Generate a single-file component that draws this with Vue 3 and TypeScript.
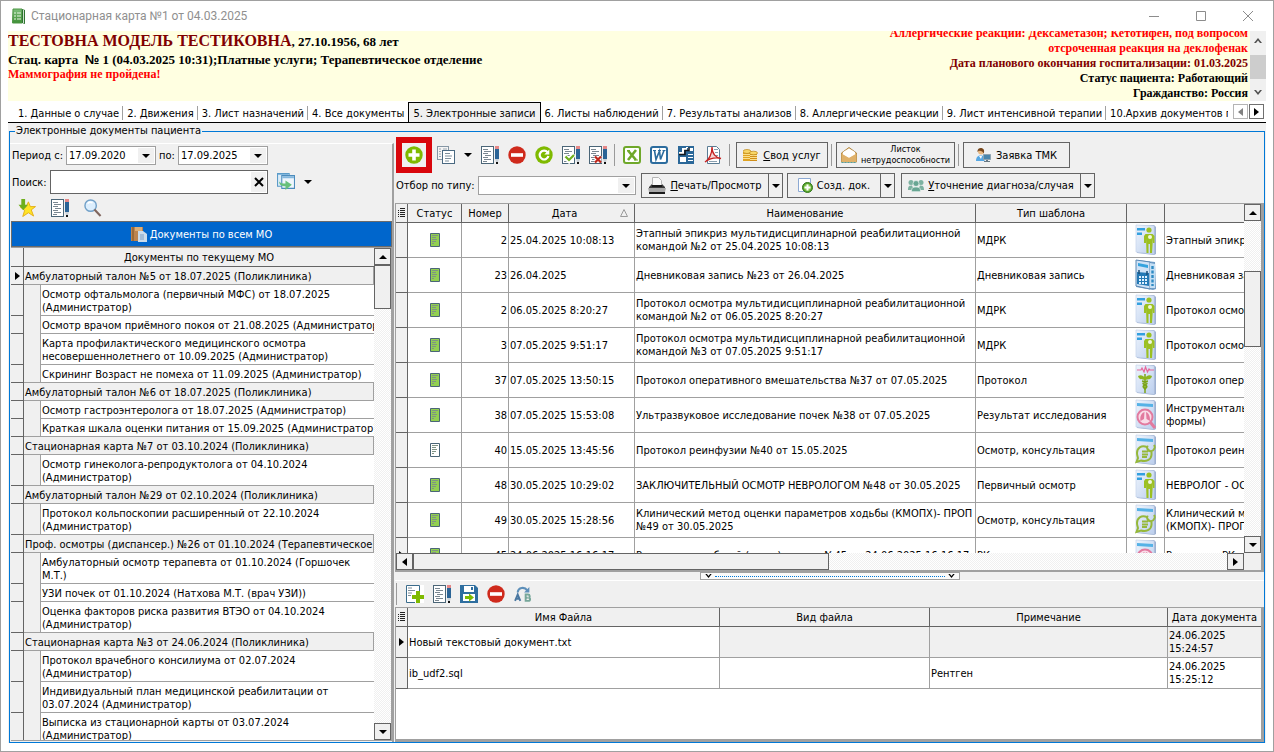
<script setup lang="ts">
import { ref } from 'vue'

interface Visit {
  title: string
  docs: string[]
}

interface DocRecord {
  done: boolean
  num: string
  date: string
  name: string
  type: string
  icon: string
  template: string
  current?: boolean
}

interface FileRow {
  name: string
  kind: string
  note: string
  date: string
  active: boolean
}

const periodFrom = ref('17.09.2020')
const periodTo = ref('17.09.2025')
const search = ref('')
const typeFilter = ref('')
const activeTab = ref(4)

const tabs: string[] = [
  '1. Данные о случае',
  '2. Движения',
  '3. Лист назначений',
  '4. Все документы',
  '5. Электронные записи',
  '6. Листы наблюдений',
  '7. Результаты анализов',
  '8. Аллергические реакции',
  '9. Лист интенсивной терапии',
  '10.Архив документов пациента',
]

const visits: Visit[] = [
  {
    title: 'Амбулаторный талон №5 от 18.07.2025 (Поликлиника)',
    docs: [
      'Осмотр офтальмолога (первичный МФС) от 18.07.2025\n(Администратор)',
      'Осмотр врачом приёмного покоя от 21.08.2025 (Администратор)',
      'Карта профилактического медицинского осмотра\nнесовершеннолетнего от 10.09.2025 (Администратор)',
      'Скрининг Возраст не помеха от 11.09.2025 (Администратор)',
    ],
  },
  {
    title: 'Амбулаторный талон №6 от 18.07.2025 (Поликлиника)',
    docs: [
      'Осмотр гастроэнтеролога от 18.07.2025 (Администратор)',
      'Краткая шкала оценки питания от 15.09.2025 (Администратор)',
    ],
  },
  {
    title: 'Стационарная карта №7 от 03.10.2024 (Поликлиника)',
    docs: ['Осмотр гинеколога-репродуктолога от 04.10.2024\n(Администратор)'],
  },
  {
    title: 'Амбулаторный талон №29 от 02.10.2024 (Поликлиника)',
    docs: ['Протокол кольпоскопии расширенный от 22.10.2024\n(Администратор)'],
  },
  {
    title: 'Проф. осмотры (диспансер.) №26 от 01.10.2024 (Терапевтическое',
    docs: [
      'Амбулаторный осмотр терапевта от 01.10.2024 (Горшочек\nМ.Т.)',
      'УЗИ почек от 01.10.2024 (Натхова М.Т. (врач УЗИ))',
      'Оценка факторов риска развития ВТЭО от 04.10.2024\n(Администратор)',
    ],
  },
  {
    title: 'Стационарная карта №3 от 24.06.2024 (Поликлиника)',
    docs: [
      'Протокол врачебного консилиума от 02.07.2024\n(Администратор)',
      'Индивидуальный план медицинской реабилитации от\n03.07.2024 (Администратор)',
      'Выписка из стационарной карты от 03.07.2024\n(Администратор)',
    ],
  },
]

const records: DocRecord[] = [
  { done: true, num: '2', date: '25.04.2025 10:08:13', name: 'Этапный эпикриз мультидисциплинарной реабилитационной\nкомандой №2 от 25.04.2025 10:08:13', type: 'МДРК', icon: 'person', template: 'Этапный эпикриз' },
  { done: true, num: '23', date: '26.04.2025', name: 'Дневниковая запись №23 от 26.04.2025', type: 'Дневниковая запись', icon: 'diary', template: 'Дневниковая запись' },
  { done: true, num: '2', date: '06.05.2025 8:20:27', name: 'Протокол осмотра мультидисциплинарной реабилитационной\nкомандой №2 от 06.05.2025 8:20:27', type: 'МДРК', icon: 'person', template: 'Протокол осмотра' },
  { done: true, num: '3', date: '07.05.2025 9:51:17', name: 'Протокол осмотра мультидисциплинарной реабилитационной\nкомандой №3 от 07.05.2025 9:51:17', type: 'МДРК', icon: 'person', template: 'Протокол осмотра' },
  { done: true, num: '37', date: '07.05.2025 13:50:15', name: 'Протокол оперативного вмешательства №37 от 07.05.2025', type: 'Протокол', icon: 'caduceus', template: 'Протокол оперативного' },
  { done: true, num: '38', date: '07.05.2025 15:53:08', name: 'Ультразвуковое исследование почек №38 от 07.05.2025', type: 'Результат исследования', icon: 'lungs', template: 'Инструментальные\nформы)' },
  { done: false, num: '40', date: '15.05.2025 13:45:56', name: 'Протокол реинфузии №40 от 15.05.2025', type: 'Осмотр, консультация', icon: 'consult', template: 'Протокол реинфузии' },
  { done: true, num: '48', date: '30.05.2025 10:29:02', name: 'ЗАКЛЮЧИТЕЛЬНЫЙ ОСМОТР НЕВРОЛОГОМ №48 от 30.05.2025', type: 'Первичный осмотр', icon: 'person', template: 'НЕВРОЛОГ - ОСМОТР' },
  { done: true, num: '49', date: '30.05.2025 15:28:56', name: 'Клинический метод оценки параметров ходьбы (КМОПХ)- ПРОП\n№49 от 30.05.2025', type: 'Осмотр, консультация', icon: 'consult', template: 'Клинический метод\n(КМОПХ)- ПРОП' },
  { done: true, num: '45', date: '24.06.2025 16:16:17', name: 'Результат на общий (клин.) анализ №45 от 24.06.2025 16:16:17', type: 'РК', icon: 'lungs', template: 'Результат РК', current: true },
]

const files: FileRow[] = [
  { name: 'Новый текстовый документ.txt', kind: '', note: '', date: '24.06.2025 15:24:57', active: true },
  { name: 'ib_udf2.sql', kind: '', note: 'Рентген', date: '24.06.2025 15:25:12', active: false },
]
</script>

<template>
  <svg class="sprite" aria-hidden="true">
    <defs>
      <linearGradient id="page" x1="0" y1="0" x2="1" y2="1">
        <stop offset="0" stop-color="#eef4fc" />
        <stop offset="1" stop-color="#bccfee" />
      </linearGradient>
      <linearGradient id="book" x1="0" y1="0" x2="0" y2="1">
        <stop offset="0" stop-color="#7fc07c" />
        <stop offset="1" stop-color="#3e8f35" />
      </linearGradient>
    </defs>
    <symbol id="i-book" viewBox="0 0 15 16">
      <path d="M2 1 L11 1 L11 15 L1.5 15 Z" fill="url(#book)" stroke="#4d9645" />
      <path d="M11 1 L14 2 V16 L11 15Z" fill="#2f7430" />
      <path d="M12.5 2 V15" stroke="#cfe3cf" />
      <path d="M3 5h2M3 8h2M3 11h2M6 5h4M6 8h4M6 11h4" stroke="#e9f6e4" />
    </symbol>
    <symbol id="i-add" viewBox="0 0 18 18">
      <circle cx="9" cy="9" r="8.7" fill="#7fba00" />
      <path d="M9 3.5v11M3.5 9h11" stroke="#fff" stroke-width="3.6" />
    </symbol>
    <symbol id="i-minus" viewBox="0 0 18 18">
      <circle cx="9" cy="9" r="8.7" fill="#cf2a1c" />
      <path d="M3 9h12" stroke="#fff" stroke-width="3.6" />
    </symbol>
    <symbol id="i-refresh" viewBox="0 0 18 18">
      <circle cx="9" cy="9" r="8.7" fill="#7fba00" />
      <path d="M12.6 6.4A4.4 4.4 0 1 0 13.4 10" fill="none" stroke="#fff" stroke-width="2.2" />
      <path d="M14.3 3.6V8.6H9.3Z" fill="#fff" />
    </symbol>
    <symbol id="i-copy" viewBox="0 0 18 18">
      <rect x=".5" y=".5" width="11" height="13" fill="#f4f4f4" stroke="#8596a4" />
      <path d="M2 3h2M2 5.500h2M2 8h2M2 10.500h2M6 3h4" stroke="#9aa7b2" />
      <rect x="5.500" y="4.500" width="12" height="13" fill="#fff" stroke="#4a6981" />
      <path d="M8 7.500h5M8 10h7M8 12.500h6M8 15h4" stroke="#7d8e9b" />
    </symbol>
    <symbol id="i-sheet" viewBox="0 0 18 18">
      <rect x=".5" y=".5" width="12" height="17" fill="#fff" stroke="#4a6577" />
      <path d="M2 3.500h5M3 5.500h7M2 7.500h5M4 9.500h6M2 11.500h5M3 13.500h7M2 15.500h4" stroke="#7a8791" />
      <path d="M14 0h4v3h-4z" fill="#e58787" />
      <path d="M14 3h4v10h-4z" fill="#2b6496" />
      <path d="M14 13h4l-1 3h-2z" fill="#cbd2d8" />
      <path d="M15 16h2v2h-2z" fill="#111" />
    </symbol>
    <symbol id="i-sheet-ok" viewBox="0 0 18 18">
      <use href="#i-sheet" width="18" height="18" />
      <path d="M3 10.500L7 14.500L12 8" fill="none" stroke="#fff" stroke-width="5" />
      <path d="M3.500 10.500L7 14L12 9" fill="none" stroke="#6fae1c" stroke-width="2.200" />
    </symbol>
    <symbol id="i-sheet-no" viewBox="0 0 18 18">
      <use href="#i-sheet" width="18" height="18" />
      <path d="M5.500 10h7v7h-7z" fill="#fff" />
      <path d="M6 10.500L12 16.500M12 10.500L6 16.500" stroke="#c0281c" stroke-width="2.200" />
    </symbol>
    <symbol id="i-sheet-add" viewBox="0 0 18 18">
      <path d="M0 0h18v18H0z" fill="#fff" />
      <path d="M.5.5h13v17H.5z" fill="#fff" stroke="#3b6c8c" />
      <path d="M2 3h4M2 5.500h7M2 8h4M2 10.500h3" stroke="#7c8c98" />
      <path d="M12 6v12M6 12h12" stroke="#fff" stroke-width="6" />
      <path d="M12 6v12M6 12h12" stroke="#7fba00" stroke-width="4" />
    </symbol>
    <symbol id="i-excel" viewBox="0 0 18 18">
      <rect x="1" y="1" width="16" height="16" rx="2" fill="#fff" stroke="#6fa82a" stroke-width="2" />
      <path d="M5 4.500L13 14M13 4L5 14" stroke="#6fa82a" stroke-width="2.600" />
      <path d="M11 14h4M4 4.500h3" stroke="#6fa82a" />
    </symbol>
    <symbol id="i-word" viewBox="0 0 18 18">
      <rect x="1" y="1" width="16" height="16" rx="2" fill="#fff" stroke="#2c6c9e" stroke-width="2" />
      <path d="M4.500 4.500L6 13.500L9.500 5L10.500 13.500L14 4.500" fill="none" stroke="#2c6c9e" stroke-width="1.600" />
      <path d="M3 4.500h3M8 4.500h3M12.500 4.500h3" stroke="#2c6c9e" />
    </symbol>
    <symbol id="i-export" viewBox="0 0 18 18">
      <path d="M1 0h16v18H1z" fill="#2b6899" />
      <path d="M10 2h6v3h-6zM2 8h5V4h4V1H9v1H5v4H2zM3 11h6v5H3zM11 8h5v1h-5zM11 11h5v1h-5zM11 14h5v1h-5z" fill="#fff" />
      <path d="M2 8.500h6v-4h4v-3" fill="none" stroke="#12161a" stroke-width="1.500" />
    </symbol>
    <symbol id="i-pdf" viewBox="0 0 18 18">
      <path d="M3.500.5h9l3 3v14h-12z" fill="#fff" stroke="#5a7c94" />
      <path d="M10 3.500h4M11 6.500h3M11 9.500h3M5 15.500h8" stroke="#8aa0b0" />
      <path d="M1 16C5 14 8 8 8 1C8 8 12 12 17 12.500C11 11 5 13 1 16Z" fill="#c62222" fill-opacity=".2" stroke="#c62222" stroke-width="1.300" />
    </symbol>
    <symbol id="i-coins" viewBox="0 0 15 14">
      <path d="M0 4h7v9H0z" fill="#e0a321" />
      <path d="M7 5h7v8H7z" fill="#d08e1a" />
      <path d="M0 6.500h7M0 8.500h7M0 10.500h7M7 7.500h7M7 9.500h7M7 11.500h7" stroke="#fae08c" />
      <ellipse cx="4" cy="3.500" rx="4" ry="2" fill="#f8d767" stroke="#bb8414" stroke-width=".7" />
      <ellipse cx="10.500" cy="5" rx="4" ry="1.800" fill="#f8d767" stroke="#bb8414" stroke-width=".7" />
    </symbol>
    <symbol id="i-letter" viewBox="0 0 16 16">
      <path d="M.5 6L8 .5L15.500 6V15H.5Z" fill="#e8c07e" stroke="#ad8441" />
      <path d="M2 5L8 1.500L14 5V8L8 11L2 8Z" fill="#fff" />
      <path d="M.5 6.500L8 11L15.500 6.500V15H.5Z" fill="#dfb16a" />
      <path d="M.5 15.500h15" stroke="#4ea0a4" stroke-dasharray="2 1" />
    </symbol>
    <symbol id="i-telemed" viewBox="0 0 15 14">
      <circle cx="5" cy="3.500" r="3" fill="#eab982" />
      <path d="M1.500 4C1 1 4-.5 6 .3C8.500 1 8.500 4 7.500 5.500C7 3 4 3 3 2.500Z" fill="#76461c" />
      <path d="M0 13C0 9 2 7.500 4.500 7.500S8 8 8.500 10V13Z" fill="#56a7e3" />
      <path d="M3 8l2 3l1-3" fill="#fff" />
      <path d="M7.500 6.500h7v5h-7z" fill="#4a86ad" stroke="#8fa3b0" />
      <path d="M10 12h2v1h2v1H8v-1h2z" fill="#677883" />
    </symbol>
    <symbol id="i-printer" viewBox="0 0 18 18">
      <path d="M4.500.5h6l3 3v6h-9z" fill="#fafafa" stroke="#b5b5b5" />
      <path d="M1 10L4 7V9H14V7L17 10V13H1Z" fill="#3b3b3b" />
      <path d="M0 11h18l-1 4H1z" fill="#a9a9a9" />
      <path d="M4 8h10v2H4z" fill="#181818" />
      <path d="M1 15h16v2H1z" fill="#1b1b1b" />
    </symbol>
    <symbol id="i-doc-add" viewBox="0 0 15 15">
      <path d="M.5.5h12v13H.5z" fill="#fff" stroke="#8ca9d3" />
      <circle cx="9.500" cy="9.500" r="5" fill="#56a52a" stroke="#35761c" />
      <circle cx="9.500" cy="9.500" r="3.500" fill="#88c653" />
      <path d="M9.500 6.500v6M6.500 9.500h6" stroke="#fff" stroke-width="2" />
    </symbol>
    <symbol id="i-people" viewBox="0 0 16 13">
      <g fill="#7db2a1">
        <circle cx="3" cy="3.500" r="2.500" />
        <circle cx="13" cy="3.500" r="2.500" />
        <path d="M0 11C0 7 1.500 6.500 4 6.500L6 11ZM16 11C16 7 14.500 6.500 12 6.500L10 11Z" />
      </g>
      <g fill="#68a693" stroke="#eef5f2" stroke-width=".7">
        <circle cx="8" cy="4.500" r="3" />
        <path d="M3.500 12.700C3.500 8.500 5 8 8 8S12.500 8.500 12.500 12.700Z" />
      </g>
    </symbol>
    <symbol id="i-windows" viewBox="0 0 17 17">
      <path d="M.5.5h11v12H.5z" fill="#dcecf8" stroke="#5b9bc8" />
      <path d="M4.500 2.500h12v12h-12z" fill="#eff6fc" stroke="#4c8cbc" />
      <path d="M5 3h11v2H5zM1 1h10v1H1z" fill="#83b7dd" />
      <path d="M2 8C2 11 4 12.500 8 12.500V16L14 11L8 7V10C5 10 4 10 2 8Z" fill="#67c07b" />
    </symbol>
    <symbol id="i-star" viewBox="0 0 18 19">
      <path d="M10.500 3L12.500 8H18L13.500 11.500L16 18L10.500 14.500L4.500 18.500L6.500 12L2 8.500H8Z" fill="#ffe425" stroke="#e3ad18" />
      <path d="M3 0h4v6h3l-5 6l-5-6h3z" fill="#6faf1c" />
    </symbol>
    <symbol id="i-search" viewBox="0 0 19 19">
      <circle cx="7" cy="7" r="6" fill="#dceefd" stroke="#71a0c8" stroke-width="1.500" />
      <path d="M4 5C5 3 7 3 9 4" fill="none" stroke="#fff" stroke-width="1.500" />
      <path d="M11 11L17.500 18" stroke="#80665e" stroke-width="2.200" />
    </symbol>
    <symbol id="i-allmo" viewBox="0 0 16 16">
      <path d="M0 1h12v14H0z" fill="#bd844e" />
      <path d="M2 1v14" stroke="#795025" />
      <path d="M4 1h7v4H4z" fill="#dcae78" />
      <path d="M7 5h5l4 3v8H7z" fill="#cbdceb" />
      <path d="M9 8h4v6H9z" fill="#a3bdd7" />
    </symbol>
    <symbol id="i-save" viewBox="0 0 18 18">
      <path d="M0 0h15l3 3v15H0z" fill="#2e6e9f" />
      <path d="M4 1h10v6H4zM3 9h12v7H3z" fill="#fff" />
      <path d="M11 2h2v3h-2z" fill="#2e6e9f" />
      <path d="M5 11h4V8.500l5 4l-5 4V14H5z" fill="#7fba00" />
    </symbol>
    <symbol id="i-rename" viewBox="0 0 17 15">
      <path d="M3.500 6C4 1 10 .5 12.500 4" fill="none" stroke="#5d8fb9" stroke-width="2" />
      <path d="M9.500 6h5V1Z" fill="#5d8fb9" />
      <path d="M1 14L3.500 8L6 14M2 12h3.500" fill="none" stroke="#4a77a0" stroke-width="1.800" />
      <path d="M11 8v6h2.500c2.300 0 2.300-3 0-3c2 0 1.700-3-.3-3zM11 11h2" fill="none" stroke="#77a79a" stroke-width="1.800" />
    </symbol>
    <symbol id="i-status" viewBox="0 0 10 14">
      <path d="M.5.5h9v13h-9z" stroke="#4a6577" />
      <path d="M2 2.500h6M2 4.500h4M2 6.500h5M2 8.500h4M2 10.500h2" stroke="#7f9384" />
    </symbol>
    <symbol id="t-page" viewBox="0 0 24 32">
      <path d="M3 2L20 1L22 3V30L20 31L3 29Z" fill="#9eb1d2" />
      <path d="M2 1L20 2V30L2 28Z" fill="url(#page)" stroke="#c4d3eb" stroke-width=".7" />
    </symbol>
    <symbol id="t-person" viewBox="0 0 24 32">
      <use href="#t-page" width="24" height="32" />
      <path d="M3 4h8v2.500H3zM3 8.500h5V11H3z" fill="#33a0df" />
      <circle cx="15" cy="6" r="2.600" fill="#9cc022" />
      <path d="M11.500 10H18.500L20.500 12V19H19V14L18 29H16V20H14.500V29H12.500L12 14V19H10V12Z" fill="#9cc022" />
      <circle cx="16" cy="13" r="2" fill="#f0f6df" />
    </symbol>
    <symbol id="t-diary" viewBox="0 0 24 32">
      <path d="M3 1L21 3L22 30L19 31L2 28Z" fill="#6f9cc6" />
      <path d="M2 1L16 3V30L2 27Z" fill="#cfe2f6" stroke="#5b88b3" />
      <path d="M4 4L14 6V9L4 7Z" fill="#34a3df" />
      <path d="M3 13L15 14V27L3 25Z" fill="#2479b5" />
      <path d="M5 11v4M13 12v4" stroke="#1b4e77" stroke-width="1.500" />
      <path d="M5 18h8M5 21h8M5 24h8" stroke="#dff1ff" stroke-width="2" stroke-dasharray="2 1" />
      <path d="M16 4L21 5V29L16 29Z" fill="#c5dff4" />
      <path d="M18.500 7v20" stroke="#2f8bc4" stroke-width="2.400" stroke-dasharray="3 1.500" />
    </symbol>
    <symbol id="t-caduceus" viewBox="0 0 24 32">
      <use href="#t-page" width="24" height="32" />
      <path d="M3 6h4l1-2l2 4l1.500-5l2 5l1.500-3l1 1h4" fill="none" stroke="#e8669a" stroke-width="1.200" />
      <path d="M11 10v19" stroke="#7ba517" stroke-width="1.500" />
      <path d="M4 12C8 10 9 13 11 13S14 10 18 12C17 16 14 15 11 16C8 15 5 16 4 12Z" fill="#8eb520" />
      <path d="M8 17C14 18 14 20 11 21S9 24 12 25M14 17C8 18 8 20 11 21S13 24 10 25" fill="none" stroke="#7ba517" stroke-width="1.500" />
    </symbol>
    <symbol id="t-lungs" viewBox="0 0 24 32">
      <use href="#t-page" width="24" height="32" />
      <path d="M3 4L19 5V8L3 7Z" fill="#56b2e6" />
      <circle cx="11" cy="18" r="7.500" fill="#f8dce8" stroke="#e27a9f" stroke-width="2" />
      <path d="M10.500 13C6 15 6 19 6.500 22L10 20ZM12 13C16 15 16 19 16 22L12.500 20Z" fill="#e27a9f" />
      <path d="M16.500 23.500L21 29" stroke="#e27a9f" stroke-width="3" />
    </symbol>
    <symbol id="t-consult" viewBox="0 0 24 32">
      <use href="#t-page" width="24" height="32" />
      <path d="M3 4L19 5V8L3 7Z" fill="#56b2e6" />
      <path d="M13 13C7 11 3 14 3 19C3 22 4 23 4 24L2.500 28L7 26.500C12 28 17 26 17.500 21V18M8 17.500h6M8 20.500h6M8 23h5M13 13.500C14 18 19 19 21 13M14 13l-1-1M21 13l-1-2" fill="none" stroke="#96b83a" stroke-width="2" />
    </symbol>
    <symbol id="i-list" viewBox="0 0 8 10">
      <path d="M0 2.500h1M0 4.500h1M0 6.500h1M0 8.500h1M2 .5h5M2 2.500h5M2 4.500h5M2 6.500h5M2 8.500h5" stroke="#222" />
    </symbol>
    <symbol id="a-down" viewBox="0 0 8 4"><path d="M0 0h8L4 4z" /></symbol>
    <symbol id="a-up" viewBox="0 0 8 4"><path d="M0 4h8L4 0z" /></symbol>
    <symbol id="a-right" viewBox="0 0 5 8"><path d="M0 0v8l5-4z" /></symbol>
    <symbol id="a-left" viewBox="0 0 5 8"><path d="M5 0v8L0 4z" /></symbol>
    <symbol id="c-down" viewBox="0 0 8 5"><path d="M0 0h2l2 2.500L6 0h2L4 5z" /></symbol>
    <symbol id="c-up" viewBox="0 0 8 5"><path d="M0 5h2l2-2.500L6 5h2L4 0z" /></symbol>
  </svg>

  <div class="window">
    <header class="titlebar">
      <svg class="app-icon"><use href="#i-book" /></svg>
      <span class="caption">Стационарная карта №1 от 04.03.2025</span>
      <div class="win-controls">
        <button type="button" aria-label="Свернуть"><svg viewBox="0 0 12 12"><path d="M1 6.500h10" /></svg></button>
        <button type="button" aria-label="Развернуть"><svg viewBox="0 0 12 12"><path d="M1.500 1.500h9v9h-9z" /></svg></button>
        <button type="button" aria-label="Закрыть"><svg viewBox="0 0 12 12"><path d="M1 1l10 10M11 1L1 11" /></svg></button>
      </div>
    </header>

    <section class="patient">
      <div class="patient-main">
        <p class="patient-name"><span class="fio">ТЕСТОВНА МОДЕЛЬ ТЕСТИКОВНА</span>, 27.10.1956, 68 лет</p>
        <p>Стац. карта&nbsp; <span class="numero">№</span> 1 (04.03.2025 10:31);Платные услуги; Терапевтическое отделение</p>
        <p class="alert">Маммография не пройдена!</p>
      </div>
      <div class="patient-side">
        <p class="alert">Аллергические реакции: Дексаметазон; Кетотифен, под вопросом</p>
        <p class="alert">отсроченная реакция на деклофенак</p>
        <p class="plan">Дата планового окончания госпитализации: 01.03.2025</p>
        <p>Статус пациента: Работающий</p>
        <p>Гражданство: Россия</p>
      </div>
      <div class="flat-scroll">
        <button type="button" aria-label="Прокрутить вверх"><svg class="chev"><use href="#c-up" /></svg></button>
        <div class="flat-track"><div class="flat-thumb"></div></div>
        <button type="button" aria-label="Прокрутить вниз"><svg class="chev"><use href="#c-down" /></svg></button>
      </div>
    </section>

    <nav class="tabs">
      <div class="tab-list" role="tablist">
        <button
          v-for="(tab, i) in tabs"
          :key="tab"
          type="button"
          role="tab"
          class="tab"
          :class="{ active: i === activeTab, 'no-sep': i === activeTab - 1 }"
          :aria-selected="i === activeTab"
          @click="activeTab = i"
        >{{ tab }}</button>
      </div>
      <div class="tab-nav">
        <button type="button" class="dim" aria-label="Предыдущие вкладки"><svg class="arrow-h"><use href="#a-left" /></svg></button>
        <button type="button" aria-label="Следующие вкладки"><svg class="arrow-h"><use href="#a-right" /></svg></button>
      </div>
    </nav>

    <main class="content">
      <fieldset class="group">
        <legend>Электронные документы пациента</legend>
        <div class="split">
          <aside class="left">
            <div class="filters">
              <div class="period">
                <label for="from">Период с:</label>
                <div class="date-box">
                  <input id="from" v-model="periodFrom" type="text" />
                  <button type="button" aria-label="Выбрать дату начала"><svg class="arrow-v"><use href="#a-down" /></svg></button>
                </div>
                <label for="to">по:</label>
                <div class="date-box">
                  <input id="to" v-model="periodTo" type="text" />
                  <button type="button" aria-label="Выбрать дату окончания"><svg class="arrow-v"><use href="#a-down" /></svg></button>
                </div>
              </div>
              <div class="search">
                <label for="search">Поиск:</label>
                <div class="search-box">
                  <input id="search" v-model="search" type="text" />
                  <button type="button" aria-label="Очистить" @click="search = ''">
                    <svg viewBox="0 0 10 10"><path d="M1 1l8 8M9 1L1 9" stroke="#000" stroke-width="2" /></svg>
                  </button>
                </div>
                <button type="button" class="tool" aria-label="Окна"><svg><use href="#i-windows" /></svg></button>
                <button type="button" class="caret" aria-label="Варианты"><svg class="arrow-v"><use href="#a-down" /></svg></button>
              </div>
              <div class="quick">
                <button type="button" class="tool" aria-label="В избранное"><svg><use href="#i-star" /></svg></button>
                <button type="button" class="tool" aria-label="Редактировать"><svg><use href="#i-sheet" /></svg></button>
                <button type="button" class="tool" aria-label="Найти"><svg><use href="#i-search" /></svg></button>
              </div>
            </div>
            <button type="button" class="all-mo"><svg><use href="#i-allmo" /></svg>Документы по всем МО</button>
            <div class="tree">
              <div class="tree-view">
                <div class="tree-head"><span class="gutter"></span><span class="tree-title">Документы по текущему МО</span></div>
                <ul class="tree-list">
                  <li v-for="(visit, i) in visits" :key="visit.title">
                    <div class="node">
                      <span class="gutter"><svg v-if="i === 0" class="arrow-h"><use href="#a-right" /></svg></span>
                      <span class="node-title">{{ visit.title }}</span>
                    </div>
                    <ul>
                      <li v-for="doc in visit.docs" :key="doc" class="leaf">
                        <span class="gutter"></span><span class="indent"></span><span class="leaf-title">{{ doc }}</span>
                      </li>
                    </ul>
                  </li>
                </ul>
              </div>
              <div class="scroll-v tree-scroll">
                <button type="button" aria-label="Вверх"><svg class="arrow-v"><use href="#a-up" /></svg></button>
                <div class="thumb"></div>
                <div class="rest"></div>
                <button type="button" aria-label="Вниз"><svg class="arrow-v"><use href="#a-down" /></svg></button>
              </div>
            </div>
          </aside>

          <section class="right">
            <div class="toolbar">
              <button type="button" class="tool marked" aria-label="Добавить запись"><svg><use href="#i-add" /></svg></button>
              <button type="button" class="tool" aria-label="Копировать"><svg><use href="#i-copy" /></svg></button>
              <button type="button" class="caret" aria-label="Варианты копирования"><svg class="arrow-v"><use href="#a-down" /></svg></button>
              <button type="button" class="tool" aria-label="Редактировать"><svg><use href="#i-sheet" /></svg></button>
              <button type="button" class="tool" aria-label="Удалить"><svg><use href="#i-minus" /></svg></button>
              <button type="button" class="tool" aria-label="Обновить"><svg><use href="#i-refresh" /></svg></button>
              <button type="button" class="tool" aria-label="Подписать"><svg><use href="#i-sheet-ok" /></svg></button>
              <button type="button" class="tool" aria-label="Отменить подпись"><svg><use href="#i-sheet-no" /></svg></button>
              <span class="sep"></span>
              <button type="button" class="tool" aria-label="Excel"><svg><use href="#i-excel" /></svg></button>
              <button type="button" class="tool" aria-label="Word"><svg><use href="#i-word" /></svg></button>
              <button type="button" class="tool" aria-label="Экспорт"><svg><use href="#i-export" /></svg></button>
              <button type="button" class="tool" aria-label="PDF"><svg><use href="#i-pdf" /></svg></button>
              <span class="sep"></span>
              <button type="button" class="push services"><svg><use href="#i-coins" /></svg><span><u>С</u>вод услуг</span></button>
              <span class="sep"></span>
              <button type="button" class="push sick"><svg><use href="#i-letter" /></svg><span class="small">Листок<br />нетрудоспособности</span></button>
              <span class="sep"></span>
              <button type="button" class="push telemed"><svg><use href="#i-telemed" /></svg><span>Заявка ТМК</span></button>
            </div>
            <div class="toolbar second">
              <label for="type">Отбор по типу:</label>
              <div class="combo">
                <select id="type" v-model="typeFilter"><option value=""></option></select>
                <span class="combo-arrow"><svg class="arrow-v"><use href="#a-down" /></svg></span>
              </div>
              <div class="dual print">
                <button type="button"><svg><use href="#i-printer" /></svg><span><u>П</u>ечать/Просмотр</span></button>
                <button type="button" class="drop" aria-label="Варианты печати"><svg class="arrow-v"><use href="#a-down" /></svg></button>
              </div>
              <div class="dual create">
                <button type="button"><svg><use href="#i-doc-add" /></svg><span>Созд. док.</span></button>
                <button type="button" class="drop" aria-label="Варианты создания"><svg class="arrow-v"><use href="#a-down" /></svg></button>
              </div>
              <div class="dual clarify">
                <button type="button"><svg><use href="#i-people" /></svg><span><u>У</u>точнение диагноза/случая</span></button>
                <button type="button" class="drop" aria-label="Варианты уточнения"><svg class="arrow-v"><use href="#a-down" /></svg></button>
              </div>
            </div>

            <div class="grid-panel">
              <div class="grid-body">
                <div class="grid-view">
                  <table class="grid records">
                    <colgroup>
                      <col class="w-mark" /><col class="w-status" /><col class="w-num" /><col class="w-date" />
                      <col class="w-name" /><col class="w-type" /><col class="w-icon" /><col />
                    </colgroup>
                    <thead>
                      <tr>
                        <th><svg class="list-icon"><use href="#i-list" /></svg></th>
                        <th>Статус</th>
                        <th>Номер</th>
                        <th>
                          <div class="sorted"><span>Дата</span><svg viewBox="0 0 8 8"><path d="M.5 7.500h7L4 .5z" fill="none" stroke="#9a9a9a" /></svg></div>
                        </th>
                        <th>Наименование</th>
                        <th>Тип шаблона</th>
                        <th></th>
                        <th></th>
                      </tr>
                    </thead>
                    <tbody>
                      <tr v-for="r in records" :key="r.num + r.date">
                        <td class="mark"><svg v-if="r.current" class="arrow-h"><use href="#a-right" /></svg></td>
                        <td class="center"><svg class="status" :class="{ done: r.done }"><use href="#i-status" /></svg></td>
                        <td class="num">{{ r.num }}</td>
                        <td>{{ r.date }}</td>
                        <td>{{ r.name }}</td>
                        <td>{{ r.type }}</td>
                        <td class="center"><svg class="type-icon"><use :href="'#t-' + r.icon" /></svg></td>
                        <td>{{ r.template }}</td>
                      </tr>
                    </tbody>
                  </table>
                </div>
                <div class="scroll-v grid-scroll">
                  <button type="button" aria-label="Вверх"><svg class="arrow-v"><use href="#a-up" /></svg></button>
                  <div class="lead"></div>
                  <div class="thumb"></div>
                  <div class="rest"></div>
                  <button type="button" aria-label="Вниз"><svg class="arrow-v"><use href="#a-down" /></svg></button>
                </div>
              </div>
              <div class="scroll-h">
                <button type="button" aria-label="Влево"><svg class="arrow-h"><use href="#a-left" /></svg></button>
                <div class="thumb"></div>
                <div class="rest"></div>
                <button type="button" aria-label="Вправо"><svg class="arrow-h"><use href="#a-right" /></svg></button>
                <span class="corner"></span>
              </div>
            </div>

            <div class="splitter">
              <button type="button" class="grip" aria-label="Свернуть панель файлов">
                <svg class="chev"><use href="#c-down" /></svg><span class="dots"></span><svg class="chev"><use href="#c-down" /></svg>
              </button>
            </div>

            <div class="file-tools">
              <span class="sep"></span>
              <button type="button" class="tool" aria-label="Добавить файл"><svg><use href="#i-sheet-add" /></svg></button>
              <button type="button" class="tool" aria-label="Изменить файл"><svg><use href="#i-sheet" /></svg></button>
              <button type="button" class="tool" aria-label="Сохранить файл"><svg><use href="#i-save" /></svg></button>
              <button type="button" class="tool" aria-label="Удалить файл"><svg><use href="#i-minus" /></svg></button>
              <button type="button" class="tool" aria-label="Переименовать"><svg><use href="#i-rename" /></svg></button>
            </div>
            <div class="files-panel">
              <table class="grid files">
                <colgroup><col class="w-mark" /><col class="w-file" /><col class="w-kind" /><col /><col class="w-fdate" /></colgroup>
                <thead>
                  <tr>
                    <th><svg class="list-icon"><use href="#i-list" /></svg></th>
                    <th>Имя Файла</th>
                    <th>Вид файла</th>
                    <th>Примечание</th>
                    <th>Дата документа</th>
                  </tr>
                </thead>
                <tbody>
                  <tr v-for="f in files" :key="f.name" :class="{ active: f.active }">
                    <td class="mark"><svg v-if="f.active" class="arrow-h"><use href="#a-right" /></svg></td>
                    <td class="file-name">{{ f.name }}</td>
                    <td>{{ f.kind }}</td>
                    <td>{{ f.note }}</td>
                    <td class="file-date">{{ f.date }}</td>
                  </tr>
                </tbody>
              </table>
            </div>
          </section>
        </div>
      </fieldset>
    </main>
  </div>
</template>

<style>
body {
  margin: 0;
  background: #fff;
}
</style>

<style scoped>
* {
  box-sizing: border-box;
}

.sprite {
  position: absolute;
  width: 0;
  height: 0;
}

.window {
  display: flex;
  flex-direction: column;
  height: 100vh;
  padding: 0 7px 8px;
  border: 1px solid #a0a0a0;
  background: #fff;
  color: #000;
  font-family: "DejaVu Sans Condensed", "DejaVu Sans", sans-serif;
  font-size: 11px;
  line-height: 13px;
  overflow: hidden;
}

button,
input,
select {
  margin: 0;
  padding: 0;
  border: 0;
  border-radius: 0;
  background: none;
  color: inherit;
  font: inherit;
  outline: none;
}

button {
  display: flex;
  align-items: center;
  justify-content: center;
  flex: none;
}

p,
ul {
  margin: 0;
  padding: 0;
  list-style: none;
}

svg {
  display: block;
  flex: none;
}

.arrow-v {
  width: 8px;
  height: 4px;
}

.arrow-h {
  width: 5px;
  height: 8px;
}

.chev {
  width: 8px;
  height: 5px;
}

/* title bar */
.titlebar {
  display: flex;
  align-items: center;
  flex: none;
  height: 30px;
  gap: 5px;
  margin-right: -5px;
  padding-left: 3px;
}

.app-icon {
  width: 15px;
  height: 16px;
}

.caption {
  flex: 1;
  color: #8f8f8f;
  font-family: Roboto, "Open Sans", sans-serif;
  font-size: 12px;
}

.win-controls {
  display: flex;
}

.win-controls button {
  width: 47px;
  height: 29px;
}

.win-controls svg {
  width: 12px;
  height: 12px;
  fill: none;
  stroke: #8c8c8c;
}

/* patient banner */
.patient {
  display: flex;
  flex: none;
  height: 70px;
  background: #ffffe1;
  font-family: "Liberation Serif", "Times New Roman", serif;
  font-size: 13px;
  font-weight: bold;
  line-height: 15px;
  white-space: nowrap;
  overflow: hidden;
}

.patient-main {
  flex: 1;
}

.patient-name {
  line-height: 20px;
}

.fio {
  color: #800000;
  font-size: 16px;
}

.numero {
  font-family: "Liberation Sans", Arial, sans-serif;
}

.alert {
  color: #f00;
  font-size: 12px;
}

.plan {
  color: #800000;
}

.patient-side {
  align-self: flex-end;
  padding-right: 2px;
  font-size: 12px;
  text-align: right;
}

.flat-scroll {
  display: flex;
  flex-direction: column;
  width: 16px;
  background: #f0f0f0;
}

.flat-scroll button {
  height: 18px;
  width: 16px;
  fill: #505050;
}

.flat-track {
  flex: 1;
  padding-top: 6px;
}

.flat-thumb {
  height: 24px;
  background: #cdcdcd;
}

/* tabs */
.tabs {
  display: flex;
  align-items: flex-end;
  flex: none;
  height: 22px;
  border-bottom: 1px solid #000;
}

.tab-list {
  display: flex;
  align-items: flex-end;
  flex: 1;
  min-width: 0;
  height: 21px;
  padding-left: 6px;
  overflow: hidden;
}

.tab {
  position: relative;
  height: 19px;
  padding: 2px 4px 0;
  white-space: nowrap;
}

.tab::after {
  content: "";
  position: absolute;
  top: 3px;
  right: 0;
  width: 1px;
  height: 14px;
  background: #a0a0a0;
}

.tab.no-sep::after,
.tab.active::after {
  display: none;
}

.tab.active {
  border: 1px solid #000;
  border-bottom: 0;
  padding-top: 1px;
  background: #f0f0f0;
}

.tabs .tab-list .active {
  height: 20px;
}

.tab-nav {
  display: flex;
  gap: 1px;
  padding: 0 2px 3px 5px;
}

.tab-nav button {
  width: 15px;
  height: 15px;
  border: 1px solid #707070;
}

.tab-nav .dim {
  border-color: #b4b4b4;
  fill: #808080;
}

/* main group */
.content {
  display: flex;
  flex: 1;
  min-height: 0;
  padding: 2px 1px 0;
  background: #f0f0f0;
}

.group {
  display: flex;
  flex: 1;
  min-width: 0;
  margin: 0;
  padding: 0;
  border: 1px solid #0078d7;
}

legend {
  margin-left: 5px;
  padding: 0 1px;
  line-height: 12px;
}

.split {
  display: flex;
  flex: 1;
  min-width: 0;
  min-height: 0;
}

.left {
  display: flex;
  flex-direction: column;
  width: 384px;
  flex: none;
  margin-top: 6px;
  padding-left: 1px;
  padding-bottom: 1px;
  border-top: 1px solid #fff;
  border-right: 2px solid #a0a0a0;
}

.filters {
  display: flex;
  flex-direction: column;
  flex: none;
  height: 77px;
  gap: 5px;
  padding-top: 2px;
}

.period,
.search,
.quick {
  display: flex;
  align-items: center;
}

.period label:first-child {
  width: 55px;
}

.period label {
  padding-left: 1px;
}

.period label:nth-of-type(2) {
  width: 22px;
  padding-left: 3px;
}

.date-box {
  display: flex;
  width: 90px;
  height: 19px;
  border: 1px solid #a0a0a0;
  background: #fff;
}

.date-box input {
  flex: 1;
  min-width: 0;
  padding-left: 2px;
}

.date-box button {
  width: 16px;
  margin: 1px;
  background: #f0f0f0;
}

.search label {
  width: 39px;
  padding-left: 1px;
}

.search-box {
  display: flex;
  width: 218px;
  height: 24px;
  border: 1px solid #646464;
  background: #fff;
}

.search-box input {
  flex: 1;
  min-width: 0;
}

.search-box button {
  width: 15px;
  margin: 1px;
  background: #f0f0f0;
}

.search-box svg {
  width: 10px;
  height: 10px;
}

.search .tool {
  margin-left: 4px;
}

.tool {
  width: 27px;
  height: 22px;
}

.tool svg {
  width: 18px;
  height: 18px;
}

.caret {
  width: 17px;
  height: 22px;
}

.quick {
  gap: 6px;
  padding-left: 2px;
}

.quick .tool {
  height: 18px;
}

.all-mo {
  height: 26px;
  gap: 3px;
  border: 1px solid #6b6b6b;
  background: #0066cc;
  color: #fff;
}

.all-mo svg {
  width: 16px;
  height: 16px;
}

.tree {
  display: flex;
  flex: 1;
  min-height: 0;
  border: solid #a0a0a0;
  border-width: 1px 1px 1px 0;
}

.tree-view {
  flex: 1;
  min-width: 0;
  overflow: hidden;
  background: #fff;
}

.tree-head,
.node,
.leaf {
  display: flex;
  white-space: pre;
  background: #f0f0f0;
}

.tree-title {
  flex: 1;
  padding: 3px 0 2px;
  border-bottom: 1px solid #646464;
  text-align: center;
}

.gutter {
  display: flex;
  align-items: center;
  justify-content: center;
  flex: none;
  width: 13px;
  border-right: 1px solid #646464;
  border-bottom: 1px solid #646464;
}

.node-title {
  flex: 1;
  min-width: 0;
  padding: 3px 0 1px 1px;
  border-right: 1px solid #a0a0a0;
  border-bottom: 1px solid #a0a0a0;
  overflow: hidden;
}

.indent {
  flex: none;
  width: 16px;
}

.leaf:last-child .indent {
  border-bottom: 1px solid #a0a0a0;
}

.leaf-title {
  flex: 1;
  min-width: 0;
  padding: 3px 0 1px 1px;
  border-left: 1px solid #a0a0a0;
  border-bottom: 1px solid #a0a0a0;
  background: #fff;
  overflow: hidden;
}

/* classic scroll bars */
.scroll-v,
.scroll-h {
  display: flex;
  flex: none;
  background: repeating-conic-gradient(#f0f0f0 0 25%, #fff 0 50%) 0 0 / 2px 2px;
}

.scroll-v {
  flex-direction: column;
  width: 17px;
}

.scroll-h {
  height: 17px;
}

.scroll-v button,
.scroll-h button {
  width: 17px;
  height: 17px;
  border: 1px solid #646464;
  background: #f0f0f0;
}

.thumb {
  border: 1px solid #646464;
  background: #f0f0f0;
}

.tree-scroll .thumb {
  flex: 42;
}

.tree-scroll .rest {
  flex: 416;
}

.grid-scroll .lead {
  flex: 50;
}

.grid-scroll .thumb {
  flex: 75;
}

.grid-scroll .rest {
  flex: 190;
}

.scroll-h .thumb {
  flex: 415;
}

.scroll-h .rest {
  flex: 399;
}

.corner {
  width: 17px;
  background: #f0f0f0;
}

/* right part */
.right {
  display: flex;
  flex-direction: column;
  flex: 1;
  min-width: 0;
  padding-left: 1px;
}

.toolbar {
  display: flex;
  align-items: center;
  flex: none;
  height: 36px;
  padding-left: 1px;
}

.marked {
  width: 36px;
  height: 36px;
  border: 6px solid #d9060c;
}

.sep {
  flex: none;
  width: 1px;
  height: 22px;
  margin: 0 3px;
  background: #9a9a9a;
}

.push {
  gap: 5px;
  height: 26px;
  margin-left: 1px;
  border: 1px solid #646464;
}

.push svg {
  width: 15px;
  height: 14px;
}

.services {
  width: 92px;
  margin-left: 3px;
}

.sick {
  width: 119px;
  gap: 4px;
}

.sick svg {
  width: 16px;
  height: 16px;
}

.telemed {
  width: 107px;
}

.small {
  font-size: 9px;
  line-height: 11px;
}

.second {
  height: 25px;
  margin-bottom: 4px;
}

.second label {
  width: 82px;
  white-space: nowrap;
}

.combo {
  display: grid;
  width: 158px;
  height: 19px;
  margin-right: 5px;
  border: 1px solid #a0a0a0;
  background: #fff;
}

.combo select,
.combo-arrow {
  grid-area: 1 / 1;
}

.combo select {
  appearance: none;
  width: 100%;
}

.combo-arrow {
  display: flex;
  align-items: center;
  justify-content: center;
  justify-self: end;
  width: 16px;
  margin: 1px;
  background: #f0f0f0;
  pointer-events: none;
}

.dual {
  display: flex;
  height: 25px;
  border: 1px solid #646464;
}

.dual button {
  flex: 1;
  gap: 4px;
  white-space: nowrap;
}

.dual .drop {
  flex: none;
  width: 14px;
  border-left: 1px solid #646464;
}

.print {
  width: 142px;
  margin-right: 4px;
}

.print button svg:not(.arrow-v) {
  width: 18px;
  height: 18px;
}

.create {
  width: 108px;
  margin-right: 6px;
}

.create button svg:not(.arrow-v) {
  width: 15px;
  height: 15px;
}

.clarify {
  width: 194px;
}

.clarify button svg:not(.arrow-v) {
  width: 16px;
  height: 13px;
}

.grid-panel {
  display: flex;
  flex-direction: column;
  flex: 1;
  min-height: 0;
  margin-top: 1px;
  border: solid #a0a0a0;
  border-width: 1px 3px 2px 1px;
}

.grid-body {
  display: flex;
  flex: 1;
  min-height: 0;
}

.grid-view {
  flex: 1;
  min-width: 0;
  overflow: hidden;
  background: #fff;
}

.grid {
  width: 100%;
  table-layout: fixed;
  border-collapse: separate;
  border-spacing: 0;
}

.grid th {
  height: 19px;
  padding: 0;
  border-right: 1px solid #646464;
  border-bottom: 1px solid #646464;
  background: #f0f0f0;
  font-weight: normal;
  white-space: nowrap;
}

.grid th:last-child {
  border-right: 0;
}

.grid td {
  height: 35px;
  padding: 0 1px;
  border-right: 1px solid #a0a0a0;
  border-bottom: 1px solid #a0a0a0;
  white-space: pre;
  overflow: hidden;
}

.grid td:last-child {
  border-right: 0;
}

.grid td.mark {
  padding: 0;
  border-color: #646464;
  background: #f0f0f0;
}

.mark svg {
  margin: auto;
}

.list-icon {
  width: 8px;
  height: 10px;
  margin: auto;
}

.w-mark { width: 12px; }
.w-status { width: 54px; }
.w-num { width: 47px; }
.w-date { width: 126px; }
.w-name { width: 341px; }
.w-type { width: 151px; }
.w-icon { width: 38px; }
.w-file { width: 312px; }
.w-kind { width: 210px; }
.w-fdate { width: 93px; }

.sorted {
  display: flex;
  align-items: center;
  padding-right: 6px;
}

.sorted span {
  flex: 1;
}

.sorted svg {
  width: 8px;
  height: 8px;
}

.center svg {
  margin: auto;
}

.grid td.num {
  text-align: right;
}

.status {
  width: 10px;
  height: 14px;
  fill: #fff;
}

.status.done {
  fill: #92d050;
}

.type-icon {
  width: 24px;
  height: 32px;
}

.splitter {
  display: flex;
  justify-content: center;
  flex: none;
  height: 8px;
}

.grip {
  width: 260px;
  height: 8px;
  gap: 3px;
  padding: 0 4px;
  border: 1px solid #a0a0a0;
  background: #fafafa;
}

.grip .chev {
  width: 7px;
  height: 4px;
}

.dots {
  flex: 1;
  border-top: 1px dotted #0078d7;
}

.file-tools {
  display: flex;
  align-items: center;
  flex: none;
  height: 27px;
  border-top: 1px solid #fff;
}

.file-tools .sep {
  margin: 0 4px 0 1px;
}

.files-panel {
  flex: none;
  height: 135px;
  border: solid #a0a0a0;
  border-width: 1px 3px 3px 1px;
  background: #fff;
}

.grid.files td {
  height: 31px;
}

.grid.files .active td {
  background: #f0f0f0;
}

.grid.files .active td.file-name {
  background: #fff;
}

.grid.files td.file-date {
  padding-right: 20px;
  white-space: normal;
}
</style>
